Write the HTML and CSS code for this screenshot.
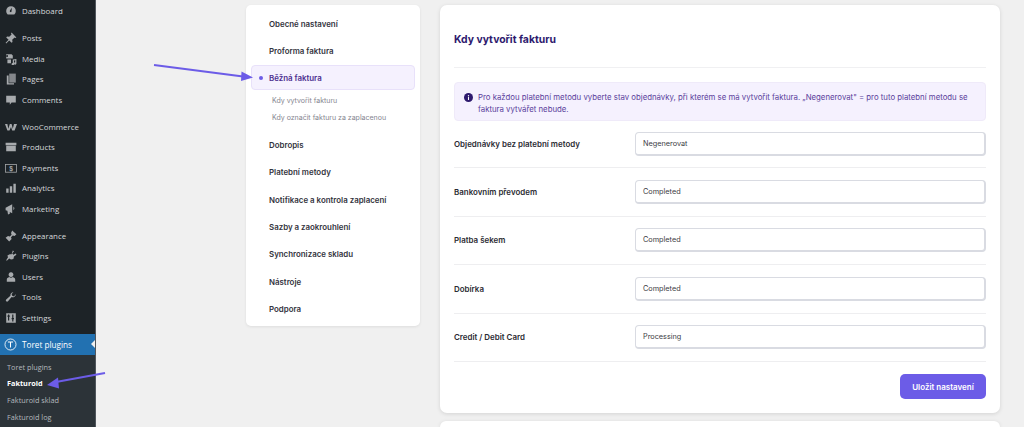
FILE: index.html
```html
<!DOCTYPE html>
<html lang="cs">
<head>
  <title>Fakturoid</title>
  <meta charset="UTF-8">
  <link rel="stylesheet" href="styles.css">
</head>
<body>

<aside class="sidebar">
  <ul class="menu">
    <li><svg class="ico" viewBox="0 0 20 20"><path d="M10 2a8 8 0 0 0-8 8c0 2.300 1 4.400 2.500 5.900h11A8 8 0 0 0 18 10a8 8 0 0 0-8-8zm0 10a2 2 0 0 1-1.800-2.800l3.300-4.700-.6 5.600A2 2 0 0 1 10 12z"/></svg>Dashboard</li>
    <li class="sep"><svg class="ico" viewBox="0 0 20 20"><path d="M11 1l8 8-2 1-1-1-4 4 .5 3.500L11 18l-4-4-5 5-1-1 5-5-4-4 1.500-1.500L7 8l4-4-1-1z"/></svg>Posts</li>
    <li><svg class="ico" viewBox="0 0 20 20"><path d="M2 2h9l2 2v5H2zM5 5a1.500 1.500 0 1 0 0 .1zM4 11h6v6H4zM13 11l6-1v7.500a2 2 0 1 1-2-1.900V12l-2 .4v6.100a2 2 0 1 1-2-1.900z"/></svg>Media</li>
    <li><svg class="ico" viewBox="0 0 20 20"><path d="M7 1h11v15H7z" opacity=".75"/><path d="M3 4h3v13h9v2H3z"/></svg>Pages</li>
    <li><svg class="ico" viewBox="0 0 20 20"><path d="M2 3h16v11h-7l-3 4v-4H2z"/></svg>Comments</li>
    <li class="sep"><svg class="ico" viewBox="0 0 20 20"><path d="M0 5h4l1.500 8L8 5h3l2 8 2-8h5l-4 11h-4l-2-6-2.500 6H4z"/></svg>WooCommerce</li>
    <li><svg class="ico" viewBox="0 0 20 20"><path d="M1 3h18v4H1zM2 8h16v9H2z"/></svg>Products</li>
    <li><svg class="ico" viewBox="0 0 20 20"><rect x="1" y="4" width="18" height="13" fill="none" stroke="currentColor" stroke-width="1.300"/><text class="ico-dollar" x="10" y="14.500">$</text></svg>Payments</li>
    <li><svg class="ico" viewBox="0 0 20 20"><path d="M2 11h4v7H2zM8 7h4v11H8zM14 3h4v15h-4z"/></svg>Analytics</li>
    <li><svg class="ico" viewBox="0 0 20 20"><path d="M1 8l11-6v15L8 15v3l-3 1-1-6-3-1zM14 6a4 4 0 0 1 0 6z"/></svg>Marketing</li>
    <li class="sep"><svg class="ico" viewBox="0 0 20 20"><path d="M12 1l7 6-3 3-3-1-3 3 1 3-4 4-6-6 4-3 3 1 3-3-1-3z"/></svg>Appearance</li>
    <li><svg class="ico" viewBox="0 0 20 20"><path d="M13 1l2 1-3 4 2 2 4-2 1 2-4 3-1 4-4 1-3-2-4 4-1-1 3-5-1-3 4-2 3 0z"/></svg>Plugins</li>
    <li><svg class="ico" viewBox="0 0 20 20"><path d="M10 2a4 4 0 0 1 3.500 6A4 4 0 0 1 6.500 8 4 4 0 0 1 10 2zM3 18v-4c0-2 2-3 4-4 2 1.500 4 1.500 6 0 2 1 4 2 4 4v4z"/></svg>Users</li>
    <li><svg class="ico" viewBox="0 0 20 20"><path d="M18 5a5 5 0 0 1-7 5l-6 7a2 2 0 0 1-3-3l7-6a5 5 0 0 1 5-6l-3 3 1 3 3 1z"/></svg>Tools</li>
    <li><svg class="ico" viewBox="0 0 20 20"><path d="M2 2h16v16H2zM5 4v2H4v2h1v6h2V8h1V6H7V4zm7 0v6h-1v2h1v4h2v-4h1v-2h-1V4z" fill-rule="evenodd"/></svg>Settings</li>
    <li class="current">
      <svg class="ico ico-round" viewBox="0 0 20 20"><circle cx="10" cy="10" r="8.500" fill="none" stroke="currentColor" stroke-width="1.300"/><path d="M6 5.500h8v1.600h-3.200v7.400H9.200V7.100H6z"/></svg>Toret plugins
    </li>
  </ul>
  <ul class="submenu">
    <li>Toret plugins</li>
    <li class="on">Fakturoid</li>
    <li>Fakturoid sklad</li>
    <li>Fakturoid log</li>
  </ul>
</aside>

<div class="content">
  <nav class="side-card">
    <a class="nav-item">Obecné nastavení</a>
    <a class="nav-item">Proforma faktura</a>
    <a class="nav-item active">Běžná faktura</a>
    <div class="nav-sub">
      <a>Kdy vytvořit fakturu</a>
      <a>Kdy označit fakturu za zaplacenou</a>
    </div>
    <a class="nav-item">Dobropis</a>
    <a class="nav-item">Platební metody</a>
    <a class="nav-item">Notifikace a kontrola zaplacení</a>
    <a class="nav-item">Sazby a zaokrouhlení</a>
    <a class="nav-item">Synchronizace skladu</a>
    <a class="nav-item">Nástroje</a>
    <a class="nav-item">Podpora</a>
  </nav>

  <div class="column">
    <section class="card">
      <h2>Kdy vytvořit fakturu</h2>
      <div class="notice">
        <svg class="notice-ico" viewBox="0 0 20 20"><circle cx="10" cy="10" r="10"/><rect class="cut" x="8.800" y="9" width="2.400" height="6.500"/><circle class="cut" cx="10" cy="6" r="1.500"/></svg>
        <p>Pro každou platební metodu vyberte stav objednávky, při kterém se má vytvořit faktura. „Negenerovat" = pro tuto platební metodu se faktura vytvářet nebude.</p>
      </div>
      <div class="row"><label>Objednávky bez platební metody</label><div class="field">Negenerovat</div></div>
      <div class="row"><label>Bankovním převodem</label><div class="field">Completed</div></div>
      <div class="row"><label>Platba šekem</label><div class="field">Completed</div></div>
      <div class="row"><label>Dobírka</label><div class="field">Completed</div></div>
      <div class="row"><label>Credit / Debit Card</label><div class="field">Processing</div></div>
      <div class="actions"><button>Uložit nastavení</button></div>
    </section>
    <section class="card card-next"></section>
  </div>
</div>

<!-- annotation arrows drawn over the screenshot -->
<svg class="arrows" viewBox="0 0 1024 427">
  <path d="M154 65L243 76.500" stroke="#6c5ce7" stroke-width="2.200" fill="none"/>
  <path d="M253 77.500L241.500 71.500 241 81z" fill="#6c5ce7"/>
  <path d="M105 373L56 382" stroke="#6c5ce7" stroke-width="2.200" fill="none"/>
  <path d="M47 385L58 377.500 59 388.500z" fill="#6c5ce7"/>
</svg>

</body>
</html>
```

FILE: styles.css
```css
html, body {
  margin: 0;
  padding: 0;
  height: 427px;
  overflow: hidden;
}
body {
  display: flex;
  background: #f0f0f0;
  font-family: Inter, "Liberation Sans", sans-serif;
  color: #2b2b33;
}

/* wp admin menu */
.sidebar {
  width: 95px;
  height: 427px;
  flex: none;
  overflow: hidden;
  background: #1d2327;
  border-right: 1px solid #50565c;
  font-family: "Open Sans", "Liberation Sans", sans-serif;
  font-size: 7.900px;
  color: #d5d8da;
}
.menu, .submenu {
  list-style: none;
  margin: 0;
  padding: 0;
}
.menu {
  padding-top: 1px;
}
.menu li {
  display: flex;
  align-items: center;
  gap: 5px;
  height: 20.500px;
  padding-left: 5px;
}
.menu li.sep {
  margin-top: 6.500px;
}
.ico {
  width: 12px;
  height: 12px;
  flex: none;
  fill: #a7aaad;
  color: #a7aaad;
}
.ico-dollar {
  font-size: 11px;
  font-family: "Liberation Sans", sans-serif;
  font-weight: 700;
  text-anchor: middle;
}
.menu li.current {
  position: relative;
  margin-top: 6px;
  background: #2271b1;
  color: #fff;
  font-size: 8.200px;
}
.menu li.current::after {
  content: "";
  position: absolute;
  right: 0;
  top: 6px;
  border: 4px solid transparent;
  border-right-color: #f0f0f0;
  border-left-width: 0;
}
.ico-round {
  fill: #fff;
  color: #fff;
  width: 13px;
  height: 13px;
  margin-left: -1px;
}
.submenu {
  background: #2c3338;
  height: 73px;
  box-sizing: border-box;
  padding-top: 4px;
  font-size: 7.300px;
  color: #b4b9be;
}
.submenu li {
  height: 16.700px;
  line-height: 16.700px;
  padding-left: 7px;
}
.submenu li.on {
  color: #fff;
  font-weight: 700;
}

/* plugin settings */
.content {
  display: flex;
  align-items: flex-start;
  gap: 20px;
  padding: 5px 0 0 150px;
}
.side-card {
  display: flex;
  flex-direction: column;
  width: 174px;
  height: 321px;
  padding: 5.500px 5px 4px;
  box-sizing: border-box;
  background: #fff;
  border-radius: 5px;
  box-shadow: 0 1px 3px rgba(0, 0, 0, .08);
}
.nav-item {
  display: block;
  height: 27.400px;
  line-height: 27.400px;
  padding-left: 18px;
  font-size: 7.900px;
  font-weight: 600;
  color: #33333d;
}
.nav-item.active {
  position: relative;
  height: 25px;
  line-height: 24px;
  margin: -.5px 0 1px;
  box-sizing: border-box;
  background: #f5f1fe;
  border: 1px solid #e8e1fa;
  border-radius: 4px;
  padding-left: 17px;
  color: #4c2f8f;
}
.nav-item.active::before {
  content: "";
  position: absolute;
  left: 7px;
  top: 10px;
  width: 4px;
  height: 4px;
  border-radius: 50%;
  background: #6c5ce7;
}
.nav-sub {
  display: flex;
  flex-direction: column;
  padding: 2px 0 5.500px 21px;
  font-size: 7px;
  color: #85858f;
}
.nav-sub a {
  height: 16.800px;
  line-height: 16.800px;
}

.column {
  display: flex;
  flex-direction: column;
  gap: 8px;
  width: 560px;
}
.card {
  background: #fff;
  border-radius: 7px;
  padding: 0 14px;
  box-shadow: 0 1px 4px rgba(0, 0, 0, .12);
}
.card-next {
  height: 6px;
  border-radius: 7px 7px 0 0;
}
h2 {
  margin: 0;
  height: 62px;
  line-height: 69px;
  font-size: 10.400px;
  font-weight: 700;
  color: #2e1a6e;
  border-bottom: 1px solid #f0f0f2;
}
.notice {
  display: flex;
  align-items: flex-start;
  gap: 5px;
  height: 39px;
  margin-top: 14px;
  padding: 8px 9px;
  box-sizing: border-box;
  background: #f5f1fe;
  border: 1px solid #efeaf9;
  border-radius: 4px;
  font-size: 7.800px;
  line-height: 12px;
  color: #5b3f9c;
}
.notice p {
  margin: 0;
}
.notice-ico {
  width: 9px;
  height: 9px;
  flex: none;
  margin-top: 1.500px;
  fill: #2e1a6e;
}
.notice-ico .cut {
  fill: #fff;
}
.row {
  display: flex;
  align-items: center;
  height: 48.500px;
  box-sizing: border-box;
  border-bottom: 1px solid #eeeef0;
}
.notice + .row {
  height: 47px;
}
.row label {
  width: 181px;
  flex: none;
  font-size: 7.950px;
  font-weight: 600;
  color: #2b2b33;
}
.field {
  flex: 1;
  height: 24px;
  line-height: 22px;
  box-sizing: border-box;
  padding-left: 7px;
  background: #fff;
  border: 1px solid #d9dbe2;
  border-bottom-width: 2px;
  border-right-width: 2px;
  border-radius: 4px;
  font-size: 7.300px;
  color: #3c3c44;
}
.actions {
  display: flex;
  justify-content: flex-end;
  padding: 12px 0 14px;
}
button {
  width: 86px;
  height: 25px;
  border: 0;
  border-radius: 5px;
  background: #6c5ce7;
  color: #fff;
  font-family: inherit;
  font-size: 8px;
  font-weight: 600;
}

.arrows {
  position: absolute;
  left: 0;
  top: 0;
  width: 1024px;
  height: 427px;
  pointer-events: none;
}
```
